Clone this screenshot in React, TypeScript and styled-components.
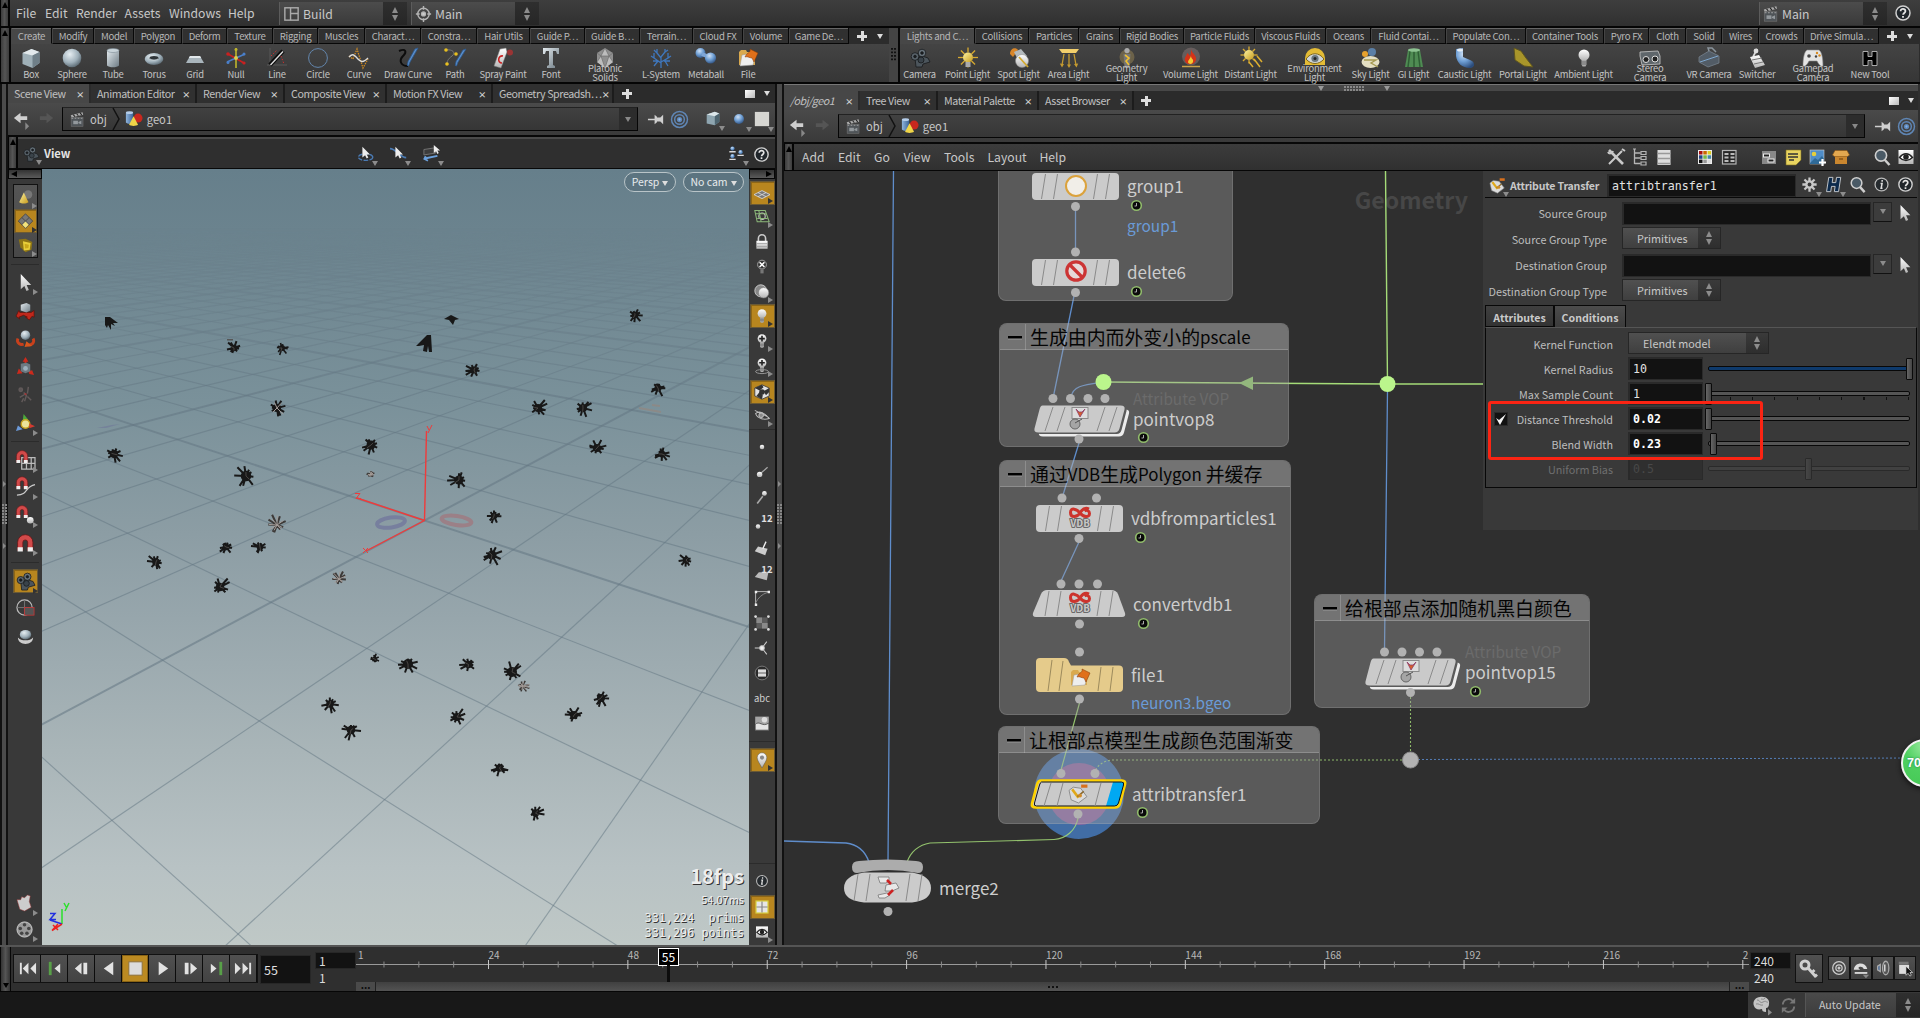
import React from "react";
import styled, { createGlobalStyle, css } from "styled-components";

const UI = `"Noto Sans CJK SC", "Noto Sans", sans-serif`;
const MONO = `"DejaVu Sans Mono", "Liberation Mono", monospace`;

const Global = createGlobalStyle`
  * { box-sizing: border-box; }
  body { margin: 0; background: #111; overflow: hidden; }
  #root { width: 1920px; height: 1018px; }
  svg { display: block; flex: none; overflow: visible; }
`;

/* ---------- icons ---------- */

const G = {
  stone: "url(#gStone)",
  ball: "url(#gBall)",
  blue: "url(#gBlue)",
  blueBall: "url(#gBlueBall)",
  yellow: "url(#gYellow)",
  white: "url(#gWhite)",
};

const DefsSvg = styled.svg`position: absolute;`;
const Defs = () => (
  <DefsSvg width="0" height="0">
    <defs>
      <linearGradient id="gStone" x1="0" y1="0" x2="1" y2="1"><stop offset="0" stopColor="#e3eaee" /><stop offset="1" stopColor="#6d7b84" /></linearGradient>
      <radialGradient id="gBall" cx=".38" cy=".3" r=".75"><stop offset="0" stopColor="#e6eef2" /><stop offset=".6" stopColor="#9fb0ba" /><stop offset="1" stopColor="#55636c" /></radialGradient>
      <linearGradient id="gBlue" x1="0" y1="0" x2="1" y2="0"><stop offset="0" stopColor="#8fb4dc" /><stop offset="1" stopColor="#3d6699" /></linearGradient>
      <radialGradient id="gBlueBall" cx=".4" cy=".3" r=".75"><stop offset="0" stopColor="#cfe0f4" /><stop offset=".5" stopColor="#6f9fd4" /><stop offset="1" stopColor="#2c4d7c" /></radialGradient>
      <linearGradient id="gYellow" x1="0" y1="0" x2="1" y2="1"><stop offset="0" stopColor="#fdf3a0" /><stop offset="1" stopColor="#c79a1c" /></linearGradient>
      <linearGradient id="gWhite" x1="0" y1="0" x2="0" y2="1"><stop offset="0" stopColor="#ffffff" /><stop offset="1" stopColor="#b4b4b4" /></linearGradient>
    </defs>
  </DefsSvg>
);

const magnet = (
  <>
    <path d="M2.5 16V8.500a7 7 0 0 1 14 0V16h-4.800V8.500a2.200 2.200 0 0 0-4.400 0V16z" fill="#d24a4a" stroke="#6b1515" strokeWidth=".7" />
    <path d="M2.5 13h4.800v4H2.500zM11.700 13h4.800v4h-4.800z" fill="#eee" />
  </>
);
const bulb = (
  <>
    <circle cx="10" cy="7" r="5.500" fill={G.white} />
    <path d="M7.500 12h5v4.600l-1 1.900h-3l-1-1.900z" fill="#aaa" />
    <path d="M7.500 14h5M7.500 16h5" stroke="#555" strokeWidth=".7" />
  </>
);
const camera = (
  <g stroke="#16191c" strokeWidth=".8">
    <path d="M5 10l7-2 6 2 2 4-7 2-1 3H6z" fill="#4c555c" />
    <circle cx="12" cy="5" r="3.800" fill="#67727a" />
    <circle cx="5" cy="8.500" r="3.800" fill="#59636b" />
    <circle cx="11" cy="12" r="3" fill="#3a434a" />
    <circle cx="12" cy="5" r="1.300" fill="#1c1f22" />
    <circle cx="5" cy="8.500" r="1.300" fill="#1c1f22" />
  </g>
);
const clapper = (
  <>
    <path d="M2 5l14-3.500 .7 2.800L3 7.700z" fill="#aaa" />
    <path d="M5 4.200l2 2.400M9 3.200l2 2.400M13 2.200l2 2.400" stroke="#222" strokeWidth="1.200" />
    <rect x="2.500" y="7.500" width="14" height="10.500" fill="#4f5458" stroke="#777" strokeWidth=".6" />
    <rect x="5" y="11.500" width="5.500" height="4" fill="#93989c" />
    <path d="M11 13l3.500-1.600v4.300L11 14.500z" fill="#93989c" />
    <path d="M3 8.600h13" stroke="#aaa" strokeDasharray="2 1.600" />
  </>
);
const rays = (cx: number, cy: number, r: number, len: number) => (
  <>
    {Array.from({ length: 8 }, (_, i) => {
      const a = (i * Math.PI) / 4;
      const x = Math.cos(a), y = Math.sin(a);
      return <line key={i} x1={cx + x * r} y1={cy + y * r} x2={cx + x * len} y2={cy + y * len} stroke="#d8aa30" strokeWidth="1.300" />;
    })}
    <circle cx={cx} cy={cy} r={r} fill={G.yellow} />
  </>
);

const ICONS: Record<string, React.ReactNode> = {
  box: <><path d="M1.500 5l9-4 8 3v11l-7 5-10-4z" fill="#9fb0b8" /><path d="M1.500 5l9-4 8 3-7 3.500z" fill="#e2e9ec" /><path d="M11.500 7.500l7-3.500v11l-7 5z" fill="#6f7f88" /></>,
  sphere: <circle cx="10" cy="10" r="9.300" fill={G.ball} />,
  tube: <><path d="M4 2.500v15c2 2.400 10 2.400 12 0v-15z" fill={G.stone} /><ellipse cx="10" cy="2.500" rx="6" ry="2" fill="#c9d4da" stroke="#7d8c95" strokeWidth=".6" /></>,
  torus: <><ellipse cx="10" cy="11" rx="9.300" ry="6" fill={G.ball} /><ellipse cx="10" cy="10" rx="4.500" ry="2" fill="#2e3438" /><path d="M6 11c2 1.500 6 1.500 8 0" stroke="#c5d0d6" fill="none" /></>,
  grid: <><path d="M5 8h10l4 7H1z" fill="#a9b5bc" /><path d="M5 8h10l1.200 2H3.800z" fill="#e2e8eb" /></>,
  null: <g strokeWidth="1.600"><path d="M10 0v20" stroke="#bfb52c" /><path d="M1 14L19 6" stroke="#4a7fc9" /><path d="M2 6l16 9" stroke="#c92020" /><circle cx="10" cy="10" r="2" fill="#d8cf50" /><circle cx="2" cy="6" r="1.800" fill="#c92020" /><circle cx="18" cy="15" r="1.600" fill="#c92020" /><circle cx="2" cy="14.500" r="1.500" fill="#4a7fc9" /><circle cx="18" cy="6" r="1.500" fill="#4a7fc9" /><circle cx="10" cy="1.500" r="1.500" fill="#bfb52c" /></g>,
  line: <><path d="M3 0v18M0 17h20" stroke="#585858" fill="none" /><path d="M3 17L16 3" stroke="#0c0c0c" strokeWidth="4.400" /><path d="M3.500 17L16 3.500" stroke="#ddd" strokeWidth="1.400" /><path d="M4 8l6-6M14 8l3 8" stroke="#c93030" strokeDasharray="1.500 1.500" /></>,
  circle: <circle cx="10" cy="10" r="9.400" fill="none" stroke="#6386ad" strokeWidth="1" />,
  curve: <><path d="M0 8l4 3 4-10 6 19 5-9" stroke="#d08a20" strokeDasharray="1.500 1" fill="none" strokeWidth="1.300" /><path d="M0 9c4-4 5-2 8 1s5 6 11 0" stroke="#ddd" strokeWidth="1.400" fill="none" /></>,
  draw: <><path d="M1 3c7-3 8 1 4 5s-3 10 5 10" stroke="#0c0c0c" strokeWidth="2" fill="none" /><path d="M20 0l-8 14-1.500 4-1.200-.6 .8-4L17 1z" fill="#5d8fca" stroke="#2c5c94" strokeWidth=".8" /></>,
  path: <><path d="M1 2c7-1 10 3 6 6s-6 6-4 9" stroke="#777" fill="none" /><circle cx="1" cy="2" r="1.800" fill="#e8c020" /><circle cx="11" cy="6" r="1.800" fill="#e8c020" /><circle cx="2" cy="16" r="1.800" fill="#e8c020" /><path d="M21 1l-8 13-1.500 4-1.200-.6 .8-4L18 2z" fill="#5d8fca" stroke="#2c5c94" strokeWidth=".8" /></>,
  spray: <><path d="M7 1l6-1 1 4-6 16-7-2z" fill={G.white} stroke="#777" strokeWidth=".5" /><path d="M10 8c-5-1-6 7-1 7" stroke="#c22" strokeWidth="1.600" fill="none" /><circle cx="17" cy="4.500" r="3" fill="#a33" opacity=".85" /></>,
  font: <path d="M2 0h16v6h-2l-1-3h-3v14l2 1v2H6v-2l2-1V3H5L4 6H2z" fill={G.stone} />,
  solid: <><path d="M10 0l8 5v9l-8 6-8-6V5z" fill="#8f8f8f" /><path d="M10 0L6 8h8zM10 20L6 8l-4 6zM14 8l4 6-8 6z" fill="#bdbdbd" /><path d="M10 0L6 8h8zM6 8L2 5M6 8l-4 6M6 8l4 12 4-12 4-3M14 8l4 6" stroke="#666" fill="none" strokeWidth=".6" /></>,
  tree: <g stroke="#3f77bd" fill="none" strokeWidth="1.300"><path d="M10 20V9M10 15L3 10V5M3 10L0 8M10 14l7-4V5M17 10l3-2M10 10L6 5V1M6 5L3 2M10 9l4-5V1M14 4l3-2M7 13H2M13 13h6M3 18l4-5M17 18l-3-5" /></g>,
  meta: <><circle cx="4.500" cy="5" r="5" fill={G.blueBall} /><path d="M6 6l7 3" stroke="#7fa6d6" strokeWidth="4" /><circle cx="14.500" cy="10" r="5.600" fill={G.blueBall} /></>,
  file: <><path d="M1 4l2-2h5l1 2h8v13H1z" fill="#d9a94e" /><path d="M4 7l14-2-3 12-13 1z" fill="#eee" stroke="#999" strokeWidth=".5" /><path d="M7 9c2-5 6-4 5-8l8 4-4 9-2-4c-3 0-4-2-7-1z" fill="#e0701a" stroke="#7c3505" strokeWidth=".5" /></>,
  camera,
  point: <>{rays(10, 9.500, 5, 10)}<path d="M7.500 14h5v5h-5z" fill="#aaa" /></>,
  spot: <><path d="M1 6C1 0 7-1 9 2L4 9z" fill="#d8862a" /><path d="M5 4l7-3 6 7-8 6z" fill="#b4babd" /><circle cx="13" cy="13" r="6.500" fill={G.white} stroke="#888" strokeWidth=".5" /><path d="M10 9l9 10" stroke="#d2a930" strokeWidth="1.800" /></>,
  area: <><path d="M0 1h20l-3 4H3z" fill="#f2cf6c" /><path d="M5 6L3 17M10 6v12M15 6l2 11" stroke="#c49a30" strokeWidth="1.300" fill="none" /><path d="M.8 15.500l2.200 4 2-3.500zM8 16.500l2 3.500 2-3.500zM15 16l2.500 3.500 1.700-4z" fill="#c49a30" /></>,
  geo: <><circle cx="10" cy="9" r="7.500" fill="#8a7a50" opacity=".6" /><circle cx="10" cy="2.600" r="2.600" fill="#aaa" /><path d="M6.500 6h7l-1 14h-5z" fill="#777" /><path d="M8 7l4 3-3 3 3 4" stroke="#f0c030" strokeWidth="1.600" fill="none" /></>,
  volume: <><circle cx="10" cy="8.500" r="9" fill="#8a7a7a" opacity=".5" /><path d="M10 1c1 5 6 6 5 11-1 5-9 6-11 1-1-4 2-5 2-8 2 1 2 2 3 3 1-2 1-4 1-7z" fill="#d43318" /><path d="M10 8c0 3 3 3 2 6s-5 2-5 0 2-3 3-6z" fill="#f5c930" /><path d="M1 18.500h18" stroke="#caa24a" strokeWidth="1.500" /></>,
  distant: <>{rays(8, 7, 5, 8.500)}<path d="M13 11l6 8M16 8l5 6M8 14l4 5" stroke="#dcae30" strokeWidth="1.500" /></>,
  env: <><path d="M0 10a10 10 0 0 1 20 0v7H0z" fill="#e3bb35" /><path d="M1 11c5-7 13-7 18 0-5 6-13 6-18 0z" fill="#cfd4d6" stroke="#806818" /><circle cx="10" cy="10.500" r="3.600" fill="#6b7880" /><circle cx="10" cy="10.500" r="1.500" fill="#222" /></>,
  sky: <><circle cx="4" cy="6" r="3" fill="#e7a22e" /><circle cx="11" cy="4" r="4" fill="#5b7fa6" /><ellipse cx="9.500" cy="14" rx="9" ry="6" fill="#e4dfc4" /><path d="M3 12h12l-5 3 7 4" stroke="#a59a52" fill="none" strokeWidth="1.400" /></>,
  gi: <><path d="M4 2h12l3 17H1z" fill="#4f8b53" /><path d="M6 3L4 19M10 3v16M14 3l2 16" stroke="#2f5f35" strokeWidth="1.500" /><ellipse cx="10" cy="2" rx="6" ry="1.800" fill="#8cc290" /></>,
  caustic: <><path d="M1 1l7-1v9l7 3c6 2 5 8 0 8C7 20 2 15 1 8z" fill={G.blueBall} /><ellipse cx="5" cy="2" rx="3" ry="1.500" fill="#e5edf5" /></>,
  portal: <path d="M1 0l7 3 5 7 7 9-9-1L2 12z" fill="#a8952a" stroke="#5e5420" />,
  ambient: bulb,
  stereo: <><path d="M0 4l18-1 2 5v8l-18 1-2-9z" fill="#5f666b" stroke="#c8c8c8" strokeWidth=".8" /><circle cx="6" cy="11.500" r="3" fill="#222" stroke="#ddd" /><circle cx="15" cy="11" r="3" fill="#222" stroke="#ddd" /></>,
  vr: <><path d="M0 9l10-6 10 5v7l-11 4-9-5z" fill="#525c66" stroke="#7c8894" strokeWidth=".7" /><path d="M1 14L19 8" stroke="#7fa8cf" /><path d="M10 3l-1-3h4l4 4" stroke="#8a949c" strokeWidth="1.500" fill="none" /></>,
  switcher: <><path d="M10 1l-4 8" stroke="#ddd" strokeWidth="1.700" /><path d="M3 9l9-2 6 10-10 3z" fill={G.white} /><path d="M5 12l10-2M7 16l9-2" stroke="#777" /><circle cx="9" cy="3" r="2.400" fill="#ddd" /></>,
  pad: <><path d="M4 2h12c3 2 4 9 4 16-2 1-4-1-6-5H6c-2 4-4 6-6 5C0 11 1 4 4 2z" fill="#e4e4e4" stroke="#888" strokeWidth=".6" /><circle cx="6" cy="8" r="1.800" fill="#444" /><circle cx="14" cy="5" r="1.200" fill="#d88a20" /><circle cx="16.500" cy="7.500" r="1.200" fill="#d88a20" /><circle cx="13" cy="8.500" r="1.200" fill="#444" /></>,
  newtool: <path d="M3 3.500h5v5h4v-5h5v14h-5v-5H8v5H3z" fill="#000" stroke="#bbb" strokeWidth=".9" />,
  layout: <g fill="none" stroke="#aaa" strokeWidth="1.500"><rect x="3" y="4" width="14" height="13" /><path d="M9 4v13M9 10h8" /></g>,
  desktop: <g fill="none" stroke="#b5b5b5" strokeWidth="1.500"><circle cx="10" cy="10.500" r="6" /><circle cx="10" cy="10.500" r="2" fill="#ccc" /><path d="M10 2v4M10 15v4M2 10.500h4M14 10.500h4" /></g>,
  clap: clapper,
  help: <><circle cx="10" cy="10" r="7" fill="#20262b" stroke="#d0d0d0" strokeWidth="1.500" /><path d="M7.600 8.200c0-3.200 5-3 4.800 0-.1 1.700-2.300 1.900-2.300 3.600M10 13v1.800" stroke="#e4e4e4" strokeWidth="1.800" fill="none" /></>,
  info: <><circle cx="10" cy="10" r="6.800" fill="#252a2e" stroke="#bbb" strokeWidth="1.300" /><path d="M10.700 5.300v1.800M9 9h1.600l-1 5h1.500" stroke="#ddd" strokeWidth="1.600" fill="none" /></>,
  back: <><path d="M2 8.500L9 3v3.500h7v4H9V14z" fill="#cfcfcf" /><path d="M14 13l4 4-4 4z" fill="#888" /></>,
  fwd: <path d="M17 8.500L10 3v3.500H3v4h7V14z" fill="#555" />,
  geoobj: <><path d="M1 3v11c2 2 6 2 8 0V3z" fill={G.blue} /><ellipse cx="5" cy="3" rx="4" ry="1.500" fill="#b4cdea" /><circle cx="14.500" cy="9" r="5" fill="#c8281e" /><path d="M9.500 7l5 9.500c-2 1.600-8 1.600-10 0z" fill="#f0d548" /></>,
  pin: <path d="M1 9.300h7v1.400H1zM8 5l2.500 2v6L8 15zM10.500 8H14l3-3v10l-3-3h-3.500z" fill="#cfcfcf" />,
  target: <g fill="none" stroke="#5f86b5" strokeWidth="1.400"><circle cx="10" cy="10" r="7.600" /><circle cx="10" cy="10" r="4.600" /><circle cx="10" cy="10" r="1.800" fill="#7fb0ea" /></g>,
  cube: <><path d="M3 5l9-3 5 2v9l-5 4-9-2z" fill="#8ea5b0" /><path d="M3 5l9-3 5 2-5 3z" fill="#dce6ea" /><path d="M12 7l5-3v9l-5 4z" fill="#4d646f" /></>,
  ball: <circle cx="10" cy="10" r="5" fill={G.blueBall} />,
  white: <rect x="3" y="2" width="15" height="15" fill="#d6d6d2" />,
  seltool: <><ellipse cx="9.500" cy="13.500" rx="8" ry="3.600" fill="none" stroke="#4a7ab3" strokeWidth="1.500" strokeDasharray="5 1.500" /><path d="M6 2v12l3-2.500 1.800 3.500 1.800-1-1.800-3.500h3.600z" fill="#eee" /></>,
  selcurve: <><path d="M0 4c7 0 11 10 18 10" stroke="#4a7ab3" strokeWidth="2" fill="none" /><path d="M6 2v12l3-2.500 1.800 3.500 1.800-1-1.800-3.500h3.600z" fill="#eee" /></>,
  selcam: <><path d="M1 5l13-2v6L1 11z" fill="#3c3c3c" stroke="#777" /><path d="M2 15l14-3M3 12.500L1.500 15.500l4 2" stroke="#6ba0dc" strokeWidth="2" fill="none" /><path d="M12 0v9l2.500-2 1.500 3 1.500-1-1.500-3h3z" fill="#eee" /></>,
  people: <g fill={G.blueBall}><circle cx="5" cy="4" r="2.400" /><circle cx="5" cy="12.500" r="2.400" /><circle cx="14" cy="8" r="2.400" /><path d="M1.500 7.500h7M1.500 16h7M10.500 11.500h7" stroke="#dcdcdc" strokeWidth="1.600" /></g>,
  tools: <g stroke="#c9c9c9" strokeWidth="2" fill="none"><path d="M3 17L16 4M16 2l3 2" /><path d="M3 3l14 14" strokeWidth="2.600" /><path d="M2 5c1 2 4 2 5-1" /></g>,
  hier: <g stroke="#b5b5b5" fill="none"><path d="M4.500 2v15M4.500 6h6M4.500 11h6M4.500 16.500h6" strokeWidth="1.300" /><path d="M3 2h3M11 4.500h5v3h-5zM11 9.500h5v3h-5zM11 15h5v3h-5z" strokeWidth="1.200" /></g>,
  list: <><rect x="3.500" y="3" width="13" height="15" fill="#dedede" /><path d="M3.500 6.500h13M3.500 11.500h13M3.500 16.500h13" stroke="#999" strokeWidth="1.500" /></>,
  palette: <><rect x="3" y="3" width="14" height="14" fill="#eee" />{["#a11", "#c60", "#dc2", "#248", "#7b4", "#48a", "#111", "#999", "#ddd"].map((c, i) => <rect key={i} x={4 + (i % 3) * 4.300} y={4 + Math.floor(i / 3) * 4.300} width="3.500" height="3.500" fill={c} />)}</>,
  table: <><rect x="3.500" y="3.500" width="13.500" height="13.500" fill="#262626" stroke="#b5b5b5" strokeWidth="1.200" /><path d="M5.500 7h4M11.500 7h4M5.500 10.500h4M11.500 10.500h4M5.500 14h4M11.500 14h4" stroke="#bbb" strokeWidth="1.800" /></>,
  nodes: <><rect x="3" y="4" width="14" height="13" fill="#888" /><rect x="4.500" y="7" width="6" height="3" fill="#222" stroke="#eee" /><rect x="9" y="12" width="6" height="3" fill="#222" stroke="#eee" /></>,
  note: <><path d="M3 3h15v10l-5 5H3z" fill="#e9d460" stroke="#7c6d1e" strokeWidth=".6" /><path d="M5 7h10M5 10h10M6 13h5" stroke="#333" strokeWidth="1.500" /></>,
  image: <><rect x="3" y="3" width="14" height="14" fill="#4f8dc8" stroke="#ccc" strokeWidth=".6" /><circle cx="7" cy="7" r="2.300" fill="#e6cf3c" /><path d="M3 16l5-5 3 2 4-4 2 3v5H3z" fill="#2f6a98" /><path d="M15.500 12v7M12 15.500h7" stroke="#fff" strokeWidth="2.200" /></>,
  bundle: <><path d="M4 9h12v8H4z" fill="#c9862f" /><path d="M4 3.500h12l2.500 4.500-2 1.500h-13L1.500 8z" fill="#e3a850" stroke="#8a5413" strokeWidth=".6" /><path d="M8 12h4" stroke="#8a5413" strokeWidth="1.500" /></>,
  search: <><path d="M12 12l5.500 6" stroke="#cfcfcf" strokeWidth="2.500" /><circle cx="9" cy="8.500" r="5.600" fill="#4a5a66" stroke="#cfcfcf" strokeWidth="1.600" /></>,
  eye: <><rect x="2.500" y="3" width="15" height="14" fill={G.white} /><path d="M3.500 10.500c4-5 9-5 13 0-4 4-9 4-13 0z" fill="#fff" stroke="#222" strokeWidth="1.400" /><circle cx="10" cy="10" r="2.800" fill="#222" /></>,
  gear: <><g stroke="#c9c9c9" strokeWidth="2.400"><path d="M10 2.500v15M2.500 10h15M4.700 4.700l10.600 10.600M15.300 4.700L4.700 15.300" /></g><circle cx="10" cy="10" r="4.600" fill="#c9c9c9" /><circle cx="10" cy="10" r="2" fill="#383838" /></>,
  hlogo: <path d="M5 2.500h4.400l-.8 5.500h3.800l.8-5.500h4.400L15.300 17.500h-4.400l.8-5.500H7.900l-.8 5.500H2.700z" fill="#0c2a4c" stroke="#c5c9cd" strokeWidth="1" />,
  attr: <><path d="M1 7l4-3 7 1 6 8-8 6-7-3z" fill="#dcdcdc" stroke="#777" strokeWidth=".7" /><path d="M4 6l6 8" stroke="#e0a818" strokeWidth="2.600" /><path d="M9 13l6-5" stroke="#8a6a30" strokeWidth="1.500" /><circle cx="11.500" cy="12" r="1.800" fill="#d08a28" /><path d="M12.500 3h6" stroke="#d8701c" strokeWidth="3" /></>,
  cone: <><circle cx="13" cy="6.500" r="5" fill="#777" /><path d="M8 4l5.500 11.500c-3 2-8 2-11 0z" fill={G.yellow} /></>,
  diamond: <><path d="M10 1l8.500 8.500L10 18 1.500 9.500z" fill="#777" stroke="#444" /><path d="M5.700 5.300l8.600 8.400M14.300 5.300l-8.600 8.400" stroke="#444" /><path d="M10 10l3.800 3.800L10 17.500l-3.800-3.700z" fill="#f2e27c" /></>,
  ybox: <><path d="M2 3l8-1 8 4-1 9-7 3-6-6z" fill="#8c7416" /><path d="M7 5l9 2-1 8-7 1z" fill="#e8cf3a" /><path d="M9 8l5 1-.6 4-4 .5z" fill="#c9a81a" /></>,
  cursor: <path d="M5 1v16l3.800-3.400L11 19l2.500-1.100L11.200 12.500H16z" fill={G.white} />,
  move: <><path d="M0 16l3-6 1 2 12 0 3-2v7l-2-1-3 4-4-3h2l-4-2-5 2 1 2z" fill="#c0281c" stroke="#5e0e08" strokeWidth=".7" /><path d="M5 4l6-2 4 2v6l-4 2-6-2z" fill={G.stone} /></>,
  rotate: <><path d="M2 10c-2 5 3 7 6 6M18 10c2 4-1 7-5 7" stroke="#c8401c" strokeWidth="3" fill="none" /><path d="M9 19l2-6 6 5z" fill="#d8561c" /><circle cx="10" cy="6.500" r="5" fill={G.ball} /></>,
  scale: <><path d="M10 0l3 5H7zM1 18l2-6 4 5zM13 15l4-1 2 5-5-1z" fill="#cc2a1c" /><path d="M10 4v4" stroke="#cc2a1c" strokeWidth="2" /><path d="M5 7l6-1 4 2v7l-5 2-5-2z" fill="#6d7a82" /><circle cx="10" cy="12" r="2.500" fill="#9db0bb" /></>,
  pose: <g stroke="#625a5a" strokeWidth="1.500" fill="none"><circle cx="5" cy="5" r="1.800" fill="#5b5555" /><path d="M8 8l3 3-2 6M12 12l4 4M13 2l-1 7M4 13l5-3M6 18l2-4" /><path d="M9 9l2 1" stroke="#a33" /></g>,
  handle: <><path d="M8 0l5 6-6 1z" fill="#4ca83c" /><circle cx="10" cy="10.500" r="4.500" fill="#ece49a" stroke="#c9a420" strokeWidth="1.500" /><path d="M0 18l2-6 5 4z" fill="#6c9ad8" /><path d="M20 13l-6-3v5z" fill="#d23a30" /></>,
  magGrid: <><path d="M6 7h14v12H6zM11 7v12M16 7v12M6 13h14" fill="none" stroke="#bbb" strokeWidth="1.300" /><g transform="scale(.85) translate(-2 -2)">{magnet}</g></>,
  magCurve: <><path d="M1 18c12 0 8-9 19-11" stroke="#ccc" fill="none" strokeWidth="1.300" /><g transform="scale(.85) translate(-2 -3)">{magnet}</g></>,
  magPoint: <><g transform="scale(.85) translate(-2 -2)">{magnet}</g><circle cx="15" cy="15" r="3.500" fill={G.white} /></>,
  magnet: <g transform="translate(-1.200 -1) scale(1.150)">{magnet}</g>,
  clock: <><circle cx="9" cy="9" r="8" fill="none" stroke="#bbb" strokeWidth="1.300" /><path d="M9 1v16M1 9h16" stroke="#777" /><rect x="9" y="9" width="10" height="8" fill="#555" stroke="#c33" strokeWidth=".8" /></>,
  drum: <><ellipse cx="10" cy="7" rx="6" ry="5" fill={G.ball} /><path d="M2 10c0 9 16 9 16 0-3 4-13 4-16 0z" fill="#ccc" /></>,
  hand: <path d="M1 6l4 0 1-3 3 1 3-3 3 1-1 6 2 6-7 4-5-2z" fill="#ccc" stroke="#933" strokeWidth=".5" />,
  reel: <><circle cx="9" cy="10" r="8" fill="#999" stroke="#ccc" />{[[9, 5], [13.500, 9], [11.500, 14], [6, 14], [4.500, 9]].map(([x, y]) => <circle key={x} cx={x} cy={y} r="1.900" fill="#444" />)}</>,
  plane: <><path d="M0 12l10-5 10 5-10 5z" fill="#777" stroke="#ddd" /><path d="M5 9.500l10 5M15 9.500l-10 5" stroke="#ddd" /></>,
  uv: <g fill="none" stroke="#8cb87a" strokeWidth="1.300"><path d="M1 2h13l5 14H4z" /><circle cx="10" cy="9" r="4" stroke="#ccc" /><path d="M2 6h13M4 12h13M6 2l3 14" /></g>,
  lock: <><path d="M5.500 9V5.500a4.500 4.500 0 0 1 9 0V9" fill="none" stroke="#ccc" strokeWidth="2" /><rect x="3" y="8.500" width="14" height="10" fill={G.white} /><path d="M3 12h14M3 15.500h14" stroke="#999" /></>,
  bulbx: <><circle cx="10" cy="7" r="5.500" fill="#333" stroke="#bbb" /><path d="M7 4l6 6M13 4l-6 6" stroke="#fff" strokeWidth="2" /><rect x="8" y="13" width="4" height="5" fill="#777" /></>,
  shaded: <><circle cx="8.500" cy="8.500" r="7.500" fill="#888" stroke="#ddd" /><circle cx="12" cy="11" r="6.500" fill={G.white} stroke="#777" strokeWidth=".7" /></>,
  bulb,
  bulbplus: <>{bulb}<path d="M10 3.500v7M6.500 7h7" stroke="#222" strokeWidth="2" /></>,
  bulbdisc: <><ellipse cx="10" cy="17" rx="8" ry="2.500" fill="none" stroke="#aaa" /><g transform="translate(0 -1)">{bulb}<path d="M10 3.500v7M6.500 7h7" stroke="#222" strokeWidth="2" /></g></>,
  checker: <><path d="M1 5l9-4 9 4v10l-9 4-9-4z" fill="#e2e2e2" stroke="#333" /><path d="M1 5l9-4 2 3-5 4zM12 9l7-4v5l-4 4zM3 15l4-5 4 4-1 5z" fill="#333" /><circle cx="10" cy="10" r="3.500" fill="#333" /></>,
  hide: <g fill="none" stroke="#bbb" strokeWidth="1.300"><path d="M1 3l18 9M2 7c4-4 12-1 17 6-6 2-14 1-17-6z" /><circle cx="9" cy="9" r="2.800" fill="#888" /></g>,
  pt: <circle cx="10" cy="10" r="2.800" fill={G.white} />,
  pt2: <><path d="M8 12l9-8" stroke="#aaa" strokeWidth="1.500" /><circle cx="7" cy="13" r="3.400" fill={G.white} /></>,
  pt3: <><path d="M4 18l7-9" stroke="#aaa" strokeWidth="2" /><circle cx="13" cy="5.500" r="3" fill={G.white} /></>,
  pt12: <circle cx="5" cy="15.500" r="2.800" fill={G.white} />,
  prim: <><path d="M1 14l4-6 12 3-3 8z" fill="#ccc" /><path d="M11 11l4-9" stroke="#eee" strokeWidth="1.700" /></>,
  prim12: <path d="M1 15l5-6h12l-2 10z" fill="#bbb" />,
  angle: <g fill="none" stroke="#bbb" strokeWidth="1.200"><path d="M2 19V2h17" /><path d="M2 16C5 10 10 5 17 3" stroke="#888" /><path d="M1 1h3v3H1zM17 1h3v3h-3zM1 17h3v3H1z" fill="#eee" stroke="none" /></g>,
  hull: <><rect x="3" y="3" width="14" height="14" fill="#5c5c5c" /><path d="M3 3h7v7H3zM10 10h7v7h-7z" fill="#8a8a8a" />{[[2, 2], [18, 2], [2, 18], [18, 18]].map(([x, y]) => <circle key={`${x}${y}`} cx={x} cy={y} r="1.700" fill="#ddd" />)}</>,
  tri: <g stroke="#ccc" strokeWidth="1.300"><path d="M1 10h9l6-8M10 10l6 8" fill="none" /><circle cx="10" cy="10" r="2.800" fill="#eee" /></g>,
  badge: <><circle cx="10" cy="10" r="8.600" fill="#2b2b2b" stroke="#888" /><rect x="5" y="5.500" width="10" height="9" fill="#ddd" /><path d="M5 10h10" stroke="#777" strokeWidth="1.500" /></>,
  photo: <><rect x="1.500" y="2" width="17" height="17" fill="#a5a5a5" /><path d="M1.500 12c5-6 9 4 17-2v9h-17z" fill="#e4e4e4" stroke="#444" strokeWidth="1" /><circle cx="13" cy="6" r="3.500" fill="#ddd" /></>,
  marker: <><path d="M10 20C7 14 4 11 4 7a6 6 0 0 1 12 0c0 4-3 7-6 13z" fill={G.white} stroke="#555" strokeWidth=".6" /><circle cx="10" cy="7" r="2.600" fill="#888" /></>,
  quad: <><rect x="2.500" y="2.500" width="15" height="15" fill="#e6e6e6" stroke="#d8d040" strokeWidth="1.500" /><path d="M10 3v14M3 10h14" stroke="#888" strokeWidth="1.500" /></>,
  key: <><circle cx="6" cy="6" r="4" fill="none" stroke="#d0d0d0" strokeWidth="3" /><path d="M9 9l8 9M12.500 14l3-3M16 17.500l2-2" stroke="#d0d0d0" strokeWidth="2.800" /></>,
  gauge: <g fill="none" stroke="#ccc" strokeWidth="1.400"><circle cx="10" cy="10" r="7" /><circle cx="10" cy="10" r="3.500" /><circle cx="10" cy="10" r="1" fill="#ccc" /></g>,
  loop: <><path d="M2 12c1-9 13-9 15-1h-4c-1-3-5-3-6-1l2 2z" fill="#ddd" /><path d="M3 15.500h14" stroke="#ddd" strokeWidth="2" /><path d="M12 17.500h7l-3.500 4z" fill="#888" /></>,
  sound: <g fill="none" stroke="#aaa" strokeWidth="1.400"><path d="M4 8v4l3 2V6z" fill="#4a6a94" /><ellipse cx="13" cy="10" rx="3.500" ry="7.500" fill="#555" /><path d="M12 6v8" stroke="#eee" /></g>,
  opts: <><path d="M3 3h11v3H3z" fill="#777" /><rect x="3.500" y="6.500" width="11" height="10" fill="#ddd" /><path d="M11 8v10l2.500-2 2 3 1.500-1-1.500-3h3z" fill="#111" stroke="#eee" strokeWidth=".7" /></>,
  brain: <><path d="M2 11C0 6 4 2 8 2c6-1 10 3 9 7 0 2-1 4-3 4l0 4c-3 0-4-1-4-3-4 1-7 0-8-3z" fill="#c4c4c4" /><path d="M5 5c4 0 2 4 6 2s3 1 5 0M4 9c3-1 4 2 7 1M9 4c2 0 3 1 4-1" stroke="#8a8a8a" fill="none" /><path d="M16 14l4 3.500-4 3z" fill="#8c8c8c" /></>,
  refresh: <g fill="none" stroke="#777" strokeWidth="2"><path d="M4 9a6 6 0 0 1 11-3M16 11a6 6 0 0 1-11 3" /><path d="M17 2v6h-6zM3 18v-6h6z" fill="#777" stroke="none" /></g>,
};

const Icon = ({ n, s = 20 }: { n: string; s?: number }) => (
  <svg width={s} height={s} viewBox="0 0 20 20">{ICONS[n]}</svg>
);

/* ---------- shared parts ---------- */

const Screen = styled.div`
  width: 1920px; height: 1018px; display: flex; flex-direction: column; overflow: hidden;
  background: #2f2f2f; color: #c8c8c8; font: 11.5px/16px ${UI}; position: relative; white-space: nowrap;
`;
const Row = styled.div`display: flex; align-items: center;`;
const Push = styled.div`flex: 1;`;
const Gap = styled.div<{ $w: number }>`width: ${p => p.$w}px; flex: none;`;

const Grip = styled.div<{ $w?: number }>`
  width: ${p => p.$w ?? 10}px; flex: none; align-self: stretch; background: linear-gradient(90deg, #3c3c3c, #555 50%, #3c3c3c);
  border: solid #050505; border-width: 0 2px 0 1px;
  &::before { content: ""; display: block; margin: 2px auto 0; width: 0; border: 3.5px solid transparent; border-top: 0; border-bottom: 6px solid #000; }
`;
const Plus = styled.span`
  width: 10px; height: 10px; flex: none;
  background: linear-gradient(#ddd, #ddd) center/10px 3px no-repeat, linear-gradient(#ddd, #ddd) center/3px 10px no-repeat;
`;
const Down = styled.span<{ $c?: string }>`
  width: 0; flex: none; border: 3.5px solid transparent; border-bottom: 0; border-top: 5px solid ${p => p.$c ?? "#ddd"};
`;
const Updown = styled.span`
  width: 24px; align-self: stretch; flex: none; display: flex; flex-direction: column; align-items: center; justify-content: center; gap: 2px;
  background: linear-gradient(#2f2f2f, #262626);
  &::before, &::after { content: ""; border: 3.5px solid transparent; }
  &::before { border-top: 0; border-bottom: 6px solid #8c8c8c; }
  &::after { border-bottom: 0; border-top: 6px solid #8c8c8c; }
`;

/* ---------- top menu ---------- */

const MenuBar = styled(Row)`
  height: 28px; flex: none; background: linear-gradient(#3e3e3e, #303030); border-bottom: 2px solid #050505; font-size: 12.2px;
`;
const MenuItem = styled.span<{ $w: number }>`width: ${p => p.$w}px; flex: none;`;
const Combo = styled(Row)<{ $w: number }>`
  width: ${p => p.$w}px; height: 23px; margin-top: 1px; background: linear-gradient(#4c4c4c, #3a3a3a); border-left: 1px solid #5c5c5c;
  padding-left: 2px; gap: 2px; justify-content: flex-start;
  ${Updown} { margin-left: auto; }
`;

/* ---------- shelf ---------- */

const Shelf = styled.div`display: flex; height: 56px; flex: none; background: #2c2c2c; border-bottom: 2px solid #050505;`;
const ShelfSet = styled.div<{ $w: number }>`
  width: ${p => p.$w}px; display: flex; flex-direction: column; background: linear-gradient(#3f3f3f, #353535);
`;
const ShelfTabs = styled.div`display: flex; align-items: center; height: 16px; background: #2c2c2c; font-size: 9.6px; letter-spacing: -.27px;`;
const ShelfTab = styled.div<{ $w: number; $on?: boolean }>`
  width: ${p => p.$w}px; height: 16px; flex: none; text-align: center; line-height: 16px; overflow: hidden; color: #b8b8b8;
  border: solid #080808; border-width: 0 1px 1px 1px; border-left-color: #444; box-shadow: inset 0 1px #666; background: #303030;
  ${p => p.$on && css`background: #474747; border-bottom-color: #474747; border-left-color: #474747;`}
`;
const Tools = styled.div`display: flex; flex: 1; background: linear-gradient(#444, #363636);`;
const Tool = styled.div<{ $gap: number }>`
  width: 40px; margin-left: ${p => p.$gap}px; flex: none; display: flex; flex-direction: column; align-items: center; padding-top: 4px;
`;
const ToolName = styled.span<{ $two?: boolean }>`
  font-size: 9.4px; letter-spacing: -.22px; text-align: center; line-height: ${p => (p.$two ? 9 : 13)}px; margin-top: ${p => (p.$two ? -4 : 0)}px; white-space: pre; color: #c4c4c4;
`;
const Splitter = styled.div`
  width: 11px; flex: none; background: #444; border: solid #080808; border-width: 0 2px 0 0; display: flex; align-items: center; justify-content: center;
  &::after { content: ""; width: 6px; height: 14px; background: radial-gradient(circle at 1px 1px, #111 1px, transparent 1.2px) 0 0/3px 3.5px; }
`;

type TabDef = [string, number];
const leftTabs: TabDef[] = [["Create", 41], ["Modify", 42], ["Model", 40], ["Polygon", 48], ["Deform", 45], ["Texture", 46], ["Rigging", 45], ["Muscles", 47], ["Charact…", 56], ["Constra…", 56], ["Hair Utils", 53], ["Guide P…", 55], ["Guide B…", 55], ["Terrain…", 53], ["Cloud FX", 50], ["Volume", 46], ["Game De…", 60]];
const rightTabs: TabDef[] = [["Lights and C…", 75], ["Collisions", 54], ["Particles", 50], ["Grains", 41], ["Rigid Bodies", 64], ["Particle Fluids", 71], ["Viscous Fluids", 71], ["Oceans", 45], ["Fluid Contai…", 75], ["Populate Con…", 80], ["Container Tools", 78], ["Pyro FX", 45], ["Cloth", 37], ["Solid", 36], ["Wires", 37], ["Crowds", 45], ["Drive Simula…", 75]];
type ToolDef = [string, string, number];
const leftTools: ToolDef[] = [["Box", "box", 20], ["Sphere", "sphere", 41], ["Tube", "tube", 41], ["Torus", "torus", 41], ["Grid", "grid", 41], ["Null", "null", 41], ["Line", "line", 41], ["Circle", "circle", 41], ["Curve", "curve", 41], ["Draw Curve", "draw", 49], ["Path", "path", 47], ["Spray Paint", "spray", 48], ["Font", "font", 48], ["Platonic\nSolids", "solid", 54], ["L-System", "tree", 56], ["Metaball", "meta", 45], ["File", "file", 42]];
const rightTools: ToolDef[] = [["Camera", "camera", 19.5], ["Point Light", "point", 48], ["Spot Light", "spot", 51], ["Area Light", "area", 50], ["Geometry\nLight", "geo", 58], ["Volume Light", "volume", 64], ["Distant Light", "distant", 60], ["Environment\nLight", "env", 64], ["Sky Light", "sky", 56], ["GI Light", "gi", 43], ["Caustic Light", "caustic", 51], ["Portal Light", "portal", 58.5], ["Ambient Light", "ambient", 60.5], ["Stereo\nCamera", "stereo", 66.5], ["VR Camera", "vr", 59], ["Switcher", "switcher", 48], ["Gamepad\nCamera", "pad", 56], ["New Tool", "newtool", 57]];

const ShelfPart = ({ w, tabs, tools }: { w: number; tabs: TabDef[]; tools: ToolDef[] }) => (
  <ShelfSet $w={w}>
    <ShelfTabs>
      {tabs.map(([t, tw], i) => <ShelfTab key={t} $w={tw} $on={i === 0}>{t}</ShelfTab>)}
      <Gap $w={8} /><Plus /><Gap $w={10} /><Down />
    </ShelfTabs>
    <Tools>
      {tools.map(([t, ic, d], i) => (
        <Tool key={t} $gap={i === 0 ? d - 20 : d - 40}>
          <Icon n={ic} /><ToolName $two={t.includes("\n")}>{t}</ToolName>
        </Tool>
      ))}
    </Tools>
  </ShelfSet>
);

/* ---------- panes ---------- */

const Main = styled.div`display: flex; height: 861px; flex: none; background: #2f2f2f;`;
const VSplit = styled.div<{ $w: number }>`
  width: ${p => p.$w}px; flex: none; background: #4b4b4b; border: solid #111; border-width: 0 2px;
  display: flex; flex-direction: column; align-items: center; justify-content: center; gap: 17px;
  &::before, &::after { content: ""; border: 3px solid transparent; border-right: 0; border-left: 3px solid #8a8a8a; }
`;
const Nubs = styled.i`width: 5px; height: 20px; margin-bottom: 2px; background: radial-gradient(circle at 1px 1px, #888 .8px, transparent 1px) 0 0/3px 3px;`;
const Pane = styled.div<{ $w: number }>`width: ${p => p.$w}px; flex: none; display: flex; flex-direction: column;`;
const PaneEdge = styled.div`height: 7px; flex: none; background: #474747; border-top: 1px solid #777; display: flex; align-items: center; padding-left: 534px; gap: 20px;`;
const EdgeDots = styled.i`width: 20px; height: 5px; background: radial-gradient(circle at 1px 1px, #888 .8px, transparent 1px) 0 0/3px 3px;`;
const PaneTabs = styled.div`display: flex; align-items: center; height: 19px; flex: none; background: #2b2b2b; font-size: 10.7px; letter-spacing: -.42px;`;
const PaneTab = styled.div<{ $w: number; $on?: boolean }>`
  width: ${p => p.$w}px; height: 19px; flex: none; display: flex; justify-content: space-between; align-items: center; padding: 0 5px 0 6px;
  background: ${p => (p.$on ? "#474747" : "#303030")}; border-right: 2px solid #1c1c1c; color: #c0c0c0;
  ${p => p.$on && css`border-right-color: #2b2b2b;`}
  &::after { content: "×"; font: bold 8.5px/12px ${UI}; color: #d5d5d5; }
`;
const WinBox = styled.span`width: 10px; height: 8px; background: linear-gradient(135deg, #fff, #bbb); flex: none;`;
const PathBar = styled.div`display: flex; align-items: center; height: 34px; flex: none; background: linear-gradient(#4a4a4a, #3a3a3a); border-bottom: 2px solid #080808;`;
const PathField = styled.div<{ $w: number }>`
  width: ${p => p.$w}px; height: 24px; flex: none; display: flex; align-items: center; border: 1px solid #060606; border-top-color: #222;
  background: linear-gradient(#414141, #363636); font-size: 11.2px; padding-left: 6px;
`;
const DropBtn = styled.span`
  width: 18px; height: 22px; margin-left: auto; background: #2c2c2c; display: flex; align-items: center; justify-content: center;
`;
const PathIcons = ({ w }: { w: number }) => (
  <PathField $w={w}>
    <Icon n="clap" s={17} /><Gap $w={4} />obj<Gap $w={6} />
    <svg width="7" height="22" viewBox="0 0 7 22"><path d="M0 0l6 11-6 11" fill="none" stroke="#111" strokeWidth="1.5" /></svg>
    <Gap $w={5} /><Icon n="geoobj" s={18} /><Gap $w={4} />geo1
    <DropBtn><Down $c="#888" /></DropBtn>
  </PathField>
);
const Spot = styled.div<{ $w: number }>`width: ${p => p.$w}px; flex: none; display: flex; justify-content: center;`;
const WithArrow = styled.span<{ $dir?: string; $c?: string }>`
  position: relative; display: flex;
  &::after {
    content: ""; position: absolute; right: -3px; bottom: -3px; border: 3.5px solid transparent;
    ${p => p.$dir === "r"
      ? css`border-right: 0; border-left: 5px solid ${p.$c ?? "#8c8c8c"};`
      : css`border-bottom: 0; border-top: 5px solid ${p.$c ?? "#8c8c8c"};`}
  }
`;

/* ---------- scene view ---------- */

const ViewHead = styled.div`display: flex; align-items: stretch; height: 32px; flex: none; background: #2f2f2f; border-bottom: 1px solid #080808; box-shadow: inset 0 2px #4a4a4a;`;
const ViewTools = styled(Row)`flex: 1; padding-top: 3px;`;
const ViewTitle = styled.b`font-size: 11.2px; color: #e4e4e4; margin: -2px 0 0 0;`;
const ViewBody = styled.div`display: flex; flex: 1; min-height: 0;`;
const SideCol = styled.div<{ $w: number }>`width: ${p => p.$w}px; flex: none; background: #393939; display: flex; flex-direction: column; align-items: center;`;
const Scroller = styled.div<{ $right?: boolean }>`
  align-self: stretch; height: 10px; flex: none; background: linear-gradient(#333, #5a5a5a); border: 1px solid #060606; display: flex; align-items: center; padding: 0 2px;
  justify-content: ${p => (p.$right ? "flex-end" : "flex-start")};
  &::after { content: ""; border: 3px solid transparent; ${p => (p.$right ? "border-left: 6px solid #000; border-right: 0;" : "border-right: 6px solid #000; border-left: 0;")} }
`;
const SideItem = styled.div<{ $mt: number; $on?: boolean; $w?: number }>`
  width: ${p => p.$w ?? 25}px; height: 24px; flex: none; margin-top: ${p => p.$mt}px; display: flex; align-items: center; justify-content: center; position: relative;
  ${p => p.$on && css`background: #b8861f; border: 1px solid #6b5a35; box-shadow: inset 1px 1px #8f6716;`}
`;
const SideText = styled.b`position: absolute; right: 2px; top: 3px; font: bold 9.5px/10px ${UI}; color: #e0e0e0;`;
const SideWord = styled.span`font: 9.5px/12px ${UI}; color: #d0d0d0;`;
const Rule = styled.div<{ $mt: number }>`width: 28px; max-width: 100%; height: 1px; flex: none; margin-top: ${p => p.$mt}px; background: #2b2b2b;`;
const Trio = styled.div`margin-top: 5px; width: 25px; border: 1px solid #111; background: linear-gradient(#555, #484848);`;

type Side = { n?: string; at: number; on?: boolean; arrow?: boolean; text?: string; word?: string; rule?: boolean };
const spaced = (items: Side[], start: number) => {
  let end = start;
  return items.map(it => {
    const half = it.rule ? 0 : 12;
    const mt = it.at - half - end;
    end = it.rule ? it.at + 1 : it.at + 12;
    return { ...it, mt };
  });
};
const leftSide: Side[] = [
  { rule: true, at: 264 }, { n: "cursor", at: 282, arrow: true }, { n: "move", at: 310 }, { n: "rotate", at: 338 }, { n: "scale", at: 366 }, { n: "pose", at: 394 }, { n: "handle", at: 423, arrow: true },
  { rule: true, at: 441 }, { n: "magGrid", at: 460, arrow: true }, { n: "magCurve", at: 487, arrow: true }, { n: "magPoint", at: 515, arrow: true }, { n: "magnet", at: 543, arrow: true },
  { rule: true, at: 562 }, { n: "camera", at: 581, on: true, arrow: true }, { n: "clock", at: 608 }, { n: "drum", at: 637 }, { n: "hand", at: 903, arrow: true }, { n: "reel", at: 929, arrow: true },
];
const rightSide: Side[] = [
  { n: "plane", at: 193, on: true, arrow: true }, { n: "uv", at: 217, arrow: true }, { n: "lock", at: 242 }, { n: "bulbx", at: 267 }, { n: "shaded", at: 292, arrow: true }, { n: "bulb", at: 316, on: true, arrow: true },
  { n: "bulbplus", at: 341, arrow: true }, { n: "bulbdisc", at: 366, arrow: true }, { n: "checker", at: 392, on: true, arrow: true }, { n: "hide", at: 416, arrow: true }, { rule: true, at: 429 },
  { n: "pt", at: 447 }, { n: "pt2", at: 472 }, { n: "pt3", at: 497 }, { n: "pt12", at: 522, text: "12" }, { n: "prim", at: 548 }, { n: "prim12", at: 573, text: "12" }, { n: "angle", at: 598 },
  { n: "hull", at: 623 }, { n: "tri", at: 648 }, { n: "badge", at: 673 }, { word: "abc", at: 698 }, { n: "photo", at: 723 }, { rule: true, at: 741 }, { n: "marker", at: 760, on: true, arrow: true },
  { rule: true, at: 863 }, { n: "info", at: 881 }, { n: "quad", at: 907, on: true }, { n: "eye", at: 932, arrow: true },
];
const SideList = ({ items, start, s }: { items: Side[]; start: number; s: number }) => (
  <>
    {spaced(items, start).map(it =>
      it.rule ? <Rule key={it.at} $mt={it.mt} /> : (
        <SideItem key={it.at} $mt={it.mt} $on={it.on}>
          {it.n && (it.arrow ? <WithArrow $dir="r" $c={it.on ? "#333" : undefined}><Icon n={it.n} s={s} /></WithArrow> : <Icon n={it.n} s={s} />)}
          {it.text && <SideText>{it.text}</SideText>}
          {it.word && <SideWord>{it.word}</SideWord>}
        </SideItem>
      ))}
  </>
);

const Viewport = styled.div`
  flex: 1; position: relative; overflow: hidden;
  background: linear-gradient(#667f8b 0%, #6b838e 8%, #7a919a 30%, #8c9da4 47%, #97a6ac 58%, #a9b5b8 75%, #b8c2c4 90%, #bfc8c6 100%);
`;
const Pill = styled.div<{ $r: number; $w: number }>`
  position: absolute; top: 3px; right: ${p => p.$r}px; width: ${p => p.$w}px; height: 20px; border: 1px solid #b9c4c8; border-radius: 10px; background: #5c7480;
  display: flex; align-items: center; justify-content: center; gap: 3px; font-size: 10.5px; line-height: 20px; color: #e6eaec;
  ${Down} { margin-top: 2px; }
`;
const Stats = styled.div`
  position: absolute; right: 5px; bottom: 4px; text-align: right; color: #eee; text-shadow: 1px 1px #333; display: flex; flex-direction: column; align-items: flex-end;
`;
const Fps = styled.b`font: bold 20px/26px ${UI};`;
const Ms = styled.span`font: 11px/20px ${UI}; margin-bottom: 2px;`;
const Count = styled.span`font: 11.8px/15px ${MONO}; white-space: pre;`;

/* Ground plane projection; u and v count blocks of five grid cells from the origin. */
const wAt = (u: number, v: number) => 0.4024 * u + 0.489 * v + 1;
const proj = (u: number, v: number): [number, number] => {
  const w = wAt(u, v);
  return [(-237.56 * u + 516.1 * v + 424.5) / w, (75.5 * u + 90 * v + 520.5) / w];
};

const gridLines = () => {
  const out: React.ReactNode[] = [];
  const add = (key: string, p: (s: number) => [number, number], w: (s: number) => number, i: number) => {
    const major = i % 5 === 0;
    let s = -3;
    while (w(s) < 0.12) s += 0.05;
    const [a, b] = p(s);
    const [c, d] = p(15);
    out.push(<line key={key} x1={a} y1={b} x2={c} y2={d} strokeWidth={major ? 2 : 1.15} opacity={major ? 0.55 : i > 25 ? 0.28 : 0.52} />);
  };
  for (let i = -10; i <= 75; i++) {
    const k = i / 5;
    add(`u${i}`, s => proj(k, s), s => wAt(k, s), i);
    add(`v${i}`, s => proj(s, k), s => wAt(s, k), i);
  }
  return out;
};

/* One cell body: a dark core with uneven arms radiating from it. */
const Neuron = ({ x, y, r, tone, seed }: { x: number; y: number; r: number; tone?: number; seed: number }) => {
  let s = seed * 7919 + 13;
  const rnd = () => ((s = (s * 1103515245 + 12345) % 2147483648) / 2147483648);
  for (let i = 0; i < 3; i++) rnd();
  const lean = rnd() * Math.PI * 2;
  const arms = (count: number, scale: number) =>
    Array.from({ length: count }, (_, i) => {
      const a = ((i + rnd() * 0.8) / count) * Math.PI * 2;
      const len = r * scale * (0.75 + 0.22 * Math.cos(a - lean) + rnd() * 0.4);
      return `M${x} ${y}l${(Math.cos(a) * len).toFixed(1)} ${(Math.sin(a) * len * 0.9).toFixed(1)}`;
    }).join("");
  return (
    <g>
      <path d={arms(9, 1.05)} stroke={tone === 2 ? "#3d3a38" : "#181818"} strokeWidth={r > 6 ? 2 : 1.6} />
      {tone !== 2 && <circle cx={x} cy={y} r={r * 0.5} fill="#181818" />}
      {tone ? <path d={arms(tone === 2 ? 8 : 4, 0.9)} stroke="#a39b97" strokeWidth="1" /> : <path d={arms(2, 0.5)} stroke="#5b5754" strokeWidth=".7" />}
    </g>
  );
};
const neurons: [number, number, number, number?][] = [
  [234, 348, 6.5], [282, 348, 6], [474, 370, 7], [538, 408, 8], [583, 408, 8], [658, 388, 7], [597, 448, 8], [662, 454, 7], [459, 480, 9], [494, 516, 6.5], [492, 555, 9], [686, 560, 6.5], [635, 315, 6.5],
  [277, 408, 8, 1], [371, 445, 9], [371, 474.5, 3.5, 2], [246, 476, 10.5], [114, 454, 8], [277, 525, 9, 2], [260, 547, 6.5], [226, 547, 6.5], [156, 562, 7.5], [220, 587, 8.5], [339, 579, 7, 2],
  [468.5, 664.5, 7.5], [512, 672, 10], [522.5, 686, 6, 2], [601, 698, 8], [574, 715, 8], [457, 717, 8], [499.5, 768, 7.5], [535.5, 813, 7.5], [374.5, 659, 4.5], [408, 664, 10], [330, 704, 7.5], [351, 730, 8.5],
];

const Scene = () => (
  <svg width="707" height="776" viewBox="42 169 707 776">
    <defs>
      <linearGradient id="fade" gradientUnits="userSpaceOnUse" x1="0" y1="228" x2="0" y2="400"><stop offset="0" stopColor="#fff" stopOpacity="0" /><stop offset=".25" stopColor="#fff" stopOpacity=".4" /><stop offset="1" stopColor="#fff" /></linearGradient>
      <mask id="gm" maskUnits="userSpaceOnUse" x="42" y="169" width="707" height="776"><rect x="42" y="169" width="707" height="776" fill="url(#fade)" /></mask>
    </defs>
    <g mask="url(#gm)" stroke="#647783">{gridLines()}</g>
    <g fill="none" strokeWidth="4">
      <ellipse cx="391" cy="522.5" rx="14" ry="5" stroke="#777f9e" transform="rotate(-8 391 522.5)" />
      <ellipse cx="456.5" cy="520.5" rx="15" ry="4.5" stroke="#9b8087" transform="rotate(8 456.5 520.5)" />
    </g>
    <path d="M97 428l15-3 8-1-14 4z" fill="#6f7799" opacity=".6" />
    <path d="M639 408l22 4M652 405l8 1" stroke="#97857c" strokeWidth="2" opacity=".6" />
    {neurons.map(([x, y, r, tone], i) => <Neuron key={i} x={x} y={y} r={r} tone={tone} seed={i + 3} />)}
    <g fill="#181818">
      <path d="M105 317l5 0 8 6-5 0 2 3-4-2 0 6-3-5-1 3-2-3z" />
      <path d="M416 346l11-11 4 0 1 17-3 0-1-6-1 6-4-1 1-6-5 1z" />
      <path d="M444 319l7-4 8 4-4 1-2 5-4-5z" />
      <path d="M227 339h6v1.5h-6z" fill="#555" />
    </g>
    <g stroke="#f03a3a" strokeWidth="1.4" fill="none">
      <path d="M424.5 520.5L426.500 431" /><path d="M424.5 520.5L357 498" /><path d="M424.5 520.5L366 551" />
      <path d="M427 426l2 4M432 425l-4 8M355 493.500h5l-4 5h5M363 548l5 5M368 548l-5 5" strokeWidth="1" />
    </g>
    <g fill="none" strokeWidth="1.500">
      <path d="M62 924V909M64 903l2.500 4.500M69 903l-4 8" stroke="#2be02b" />
      <path d="M62 924l-12-4M50 913.500h5l-5 6h6" stroke="#2230e0" />
      <path d="M62 924l-10 6.500M53 925l5 5M58 924l-6 6.500" stroke="#ee2020" />
    </g>
  </svg>
);

/* ---------- network ---------- */

const NetMenu = styled.div`display: flex; align-items: center; height: 27px; flex: none; background: linear-gradient(#3c3c3c, #303030); border-bottom: 1px solid #060606; font-size: 12.2px;`;
const Canvas = styled.div`position: relative; flex: 1; overflow: hidden; background: #2f2f2f;`;
const Layer = styled.svg`position: absolute; left: 0; top: 0;`;
const at = css<{ $x: number; $y: number }>`position: absolute; left: ${p => p.$x - 784}px; top: ${p => p.$y - 171}px;`;
const NetBox = styled.div<{ $x: number; $y: number; $w: number; $h: number }>`
  ${at} width: ${p => p.$w}px; height: ${p => p.$h}px; border-radius: 8px; overflow: hidden;
  background: rgba(160, 160, 160, .38); border: 1px solid rgba(200, 200, 200, .2);
`;
const BoxHead = styled.div`
  height: 26px; display: flex; align-items: center; background: rgba(200, 200, 200, .23); border-bottom: 1px solid rgba(220, 220, 220, .25);
  font: 18.9px/25px ${UI}; color: #050505;
`;
const Fold = styled.span`
  width: 26px; height: 26px; flex: none; border-right: 1px solid rgba(220, 220, 220, .25); margin-right: 4px;
  background: linear-gradient(#000, #000) 8px 12px/14px 2.5px no-repeat, linear-gradient(#999, #999) 8px 14px/14px 1.5px no-repeat;
`;
const Lat = styled.span`font-size: 16.9px;`;
const NodeName = styled.div<{ $x: number; $y: number }>`${at} margin-top: -13px; font: 17px/24px ${UI}; color: #cdcdcd;`;
const NodeNote = styled(NodeName)`font-size: 15.4px; color: #6a9ad6;`;
const NodeType = styled(NodeName)`font-size: 15.3px; color: #6b6b6b;`;
const Watermark = styled.div`position: absolute; right: 450px; top: 13px; font: bold 23.1px/30px ${UI}; color: #474747;`;

const Stripes = ({ x, y, h, gap = 28, slant = 4 }: { x: number; y: number; h: number; gap?: number; slant?: number }) => (
  <path d={[-gap - 4, -gap + 8, gap - 8, gap + 4].map(d => `M${x + d + slant / 2} ${y + 1}l${-slant} ${h - 2}`).join("")} stroke="#8a8a8a" strokeWidth="1" />
);
const Dot = ({ x, y, r = 4.5 }: { x: number; y: number; r?: number }) => <circle cx={x} cy={y} r={r} fill="#b2b2b2" />;
const Clock = ({ x, y }: { x: number; y: number }) => (
  <g><circle cx={x} cy={y} r="4.8" fill="#0b0b0b" stroke="#92bd6c" strokeWidth="1.6" /><path d={`M${x} ${y - 2.5}v3h-2`} stroke="#aaa" strokeWidth="1" fill="none" /></g>
);
const VdbText = styled.text`font: 900 9.5px ${UI}; fill: #c4c4c4; stroke: #555; stroke-width: 1.6px; paint-order: stroke;`;
const Vdb = ({ x, y }: { x: number; y: number }) => (
  <g>
    <path d={`M${x} ${y - 5}c-3-4-9.500-6-9.500-.5s6.500 5 9.500 .5c3-5 6-5.500 9-4M${x} ${y - 5}c3 4 9.500 5 9.500 .5 0-3-3-4-5-2.500`} fill="none" stroke="#cc332c" strokeWidth="3" />
    <VdbText x={x} y={y + 9} textAnchor="middle">VDB</VdbText>
  </g>
);
const Vop = ({ x, y }: { x: number; y: number }) => {
  const shape = (dx: number, dy: number) => `M${x + 9 + dx} ${y + dy}h78q5 0 4 4l-5 19q-1 4-5 4h-76q-5 0-4-4l5-19q1-4 3-4z`;
  return (
    <g>
      <path d={shape(4, 3.5)} fill="#ececec" /><path d={shape(1.5, 1)} fill="#5a5a5a" /><path d={shape(-0.5, -0.5)} fill="#cacaca" />
      <Stripes x={x + 47} y={y} h={26} slant={8} />
      <rect x={x + 38} y={y + 1.5} width="16" height="11" fill="#ddd" stroke="#8a8a8a" />
      <path d={`M${x + 42} ${y + 3}l4 8 5-8-3 3h-3z`} fill="#d8602a" stroke="#8a3a6a" strokeWidth=".8" />
      <circle cx={x + 41} cy={y + 18} r="5" fill="#a5a5a5" stroke="#666" /><path d={`M${x + 41} ${y + 17}l7-4`} stroke="#555" />
    </g>
  );
};
const BoxNode = ({ x, y, children }: { x: number; y: number; children?: React.ReactNode }) => (
  <g><rect x={x} y={y} width="87" height="27" rx="4" fill="#cbcbcb" /><Stripes x={x + 43.5} y={y} h={27} />{children}</g>
);

const vb = "784 171 1134 774";
const Wires = () => (
  <Layer width="1134" height="774" viewBox={vb} fill="none">
    <circle cx="1079" cy="794" r="45" fill="#416da5" /><circle cx="1079" cy="794" r="31" fill="#8d68a4" />
    <g stroke="#5f8dcb" strokeWidth="1.3">
      <path d="M893.500 171L888 862M784 841l62 2q17 2 23 19M1075.500 210v38M1074 296L1053.500 396M1079 443l-16 52M1079 542l-18 39M1387.500 390L1384.500 650" />
      <path d="M1103 382c-20 3-30 4-32 15" />
    </g>
    <g stroke="#a5dc78" strokeWidth="1.4">
      <path d="M1385.500 171l2 213M1103 382l284 2h96" /><path d="M1078 818c-2 12-12 21-24 21.500L930 843q-17 3-23 19M1079.500 703L1061 770" strokeWidth="1.2" opacity=".85" />
      <path d="M1410.500 697v63M1410 760H1112q-14 2-17 12" strokeDasharray="2 2" strokeWidth="1.1" opacity=".8" />
    </g>
    <path d="M1418 759.500L1918 758" stroke="#557fb8" strokeDasharray="2 2" />
  </Layer>
);
const Nodes = () => (
  <Layer width="1134" height="774" viewBox={vb}>
    <BoxNode x={1032} y={173}><circle cx="1076" cy="186" r="10" fill="#f1eee8" stroke="#dba23c" strokeWidth="2" /></BoxNode>
    <BoxNode x={1032} y={259}><circle cx="1076" cy="271" r="9.200" fill="#e6dada" stroke="#cc3434" strokeWidth="3.200" /><path d="M1070 265l12 12" stroke="#cc3434" strokeWidth="3.200" /></BoxNode>
    <Dot x={1075.5} y={206.5} /><Dot x={1075.5} y={252} /><Dot x={1075.5} y={292.5} />
    {[1053, 1070.5, 1088, 1105].map(x => <Dot key={x} x={x} y={398.5} />)}
    <Vop x={1034} y={406} /><Dot x={1079} y={439} />
    <Dot x={1062} y={498} /><Dot x={1096.5} y={498} />
    <BoxNode x={1036} y={505}><Vdb x={1080} y={518} /></BoxNode><Dot x={1079} y={538.5} />
    <Dot x={1061} y={584} /><Dot x={1079} y={584} /><Dot x={1097.5} y={584} />
    <path d="M1047 590h64q5 0 7 4l7 19q1 4-3 4h-86q-4 0-3-4l8-19q2-4 6-4z" fill="#cbcbcb" /><Stripes x={1079} y={590} h={27} /><Vdb x={1080} y={603} />
    <Dot x={1079.5} y={624} /><Dot x={1079.5} y={652} />
    <path d="M1040 658h24q4 0 5 4l2 3.500h48q4 0 4 4V688q0 4-4 4h-79q-4 0-4-4v-26q0-4 4-4z" fill="#e5cb8b" />
    <path d="M1052 660l-4 31M1063 661l-4 30M1101 667l-3 24M1113 667l-3 24" stroke="#9c8a5c" strokeWidth="1" />
    <g transform="translate(1070 668)"><Icon n="file" /></g>
    <Dot x={1079.5} y={699} />
    <Dot x={1061} y={773.5} /><Dot x={1095} y={773.5} />
    <path d="M1041 780.500h81q4 0 3 4l-5 19q-1 4-5 4h-79q-5 0-4-4l5-19q1-4 4-4z" fill="#cacaca" />
    <path d="M1113 782h10q2 0 1 3l-5 18q-1 3-4 3h-9z" fill="#00a8f3" />
    <path d="M1041 780.500h81q4 0 3 4l-5 19q-1 4-5 4h-79q-5 0-4-4l5-19q1-4 4-4z" fill="none" stroke="#ffd200" strokeWidth="2.600" />
    <path d="M1041.500 782h80q3 0 2 3l-5 18q-1 3-4 3h-78q-3 0-2-3l5-18q1-3 2-3z" fill="none" stroke="#111" strokeWidth="1" />
    <path d="M1051 783l-7 23M1063 783l-6 23M1101 783l-6 23" stroke="#8a8a8a" strokeWidth="1" />
    <g transform="translate(1068 783) scale(1.050)"><Icon n="attr" /></g>
    <Dot x={1078} y={814} />
    <path d="M857 873q-5 0-5-6t7-6q28-3 57 0 7 0 7 6t-5 6q-30-6-61 0z" fill="#acacac" />
    <path d="M864 872.500h48q19 3 19 15.500t-19 14.500h-48q-20-2-20-14.500t20-15.500z" fill="#cbcbcb" />
    <Stripes x={888} y={873} h={29} />
    <path d="M878 877h11v4l-3 2h-6zM886 885l10-2 3 5-7 3h-7zM878 895l9-2 3 2-5 3h-6z" fill="#e8e8e8" stroke="#777" strokeWidth=".8" /><path d="M887 880l4 4M893 890l-5 5" stroke="#c22" strokeWidth="2.600" />
    <Dot x={888} y={911.5} />
    {[1384.5, 1402, 1419.5, 1437].map(x => <Dot key={x} x={x} y={652} />)}
    <Vop x={1365} y={659} /><Dot x={1410.5} y={692.5} />
    <circle cx="1410.500" cy="760" r="8" fill="#b2b2b2" stroke="#8b8b8b" />
    <circle cx="1103.500" cy="382" r="8" fill="#bbf58c" /><circle cx="1387.500" cy="384" r="8" fill="#bbf58c" />
    <path d="M1239 383l14-6.500v13.500z" fill="#93b77d" />
    {[[1136.5, 205.5], [1136.5, 291.5], [1143.5, 437.5], [1140.5, 537.5], [1143.5, 623.5], [1142.5, 812.5], [1475.5, 691.5]].map(([x, y]) => <Clock key={`${x}-${y}`} x={x} y={y} />)}
  </Layer>
);

/* ---------- parameters ---------- */

const Params = styled.div`position: absolute; right: 0; top: 0; width: 435px; height: 359px; background: #393939; padding: 3px 1px 0 2px; font-size: 10.8px;`;
const ParmHead = styled(Row)`height: 24px; border-bottom: 1px solid #080808; padding-left: 4px;`;
const ParmType = styled.b`width: 97px; flex: none; font-size: 10.6px; letter-spacing: -.2px; line-height: 20px;`;
const Entry = styled.div<{ $w: number; $h?: number; $bold?: boolean; $dim?: boolean }>`
  width: ${p => p.$w}px; height: ${p => p.$h ?? 23}px; flex: none; background: #121212; border: solid #2a2a2a; border-width: 2px 1px 1px 2px; padding-left: 3px;
  font: ${p => (p.$bold ? "bold" : "normal")} 11.6px/20px ${MONO}; color: #e2e2e2;
  ${p => p.$bold && css`color: #fff;`}
  ${p => p.$dim && css`background: #2f2f2f; color: #484848;`}
`;
const HeadIcons = styled(Row)`margin-left: 4px; gap: 5px; height: 20px; margin-top: -3px;`;
const ParmRows = styled.div`padding-top: 2px;`;
const Line = styled.div<{ $h: number }>`display: flex; align-items: center; height: ${p => p.$h}px;`;
const Label = styled.div<{ $w: number; $dim?: boolean }>`width: ${p => p.$w}px; flex: none; text-align: right; color: ${p => (p.$dim ? "#6f6f6f" : "#bdbdbd")};`;
const Menu = styled.div<{ $w: number }>`
  width: ${p => p.$w}px; height: 22px; margin-bottom: 2px; flex: none; display: flex; align-items: center; background: linear-gradient(#505050, #3f3f3f); border: 1px solid #262626; padding-left: 14px;
  ${Updown} { margin-left: auto; width: 22px; background: linear-gradient(#3a3a3a, #2e2e2e); }
`;
const SmallDrop = styled.span`width: 19px; height: 20px; margin: 0 4px 3px 2px; flex: none; background: #3c3c3c; border: 1px solid #262626; border-bottom-color: #111; display: flex; align-items: center; justify-content: center;`;
const ParmTabs = styled.div`display: flex; height: 22px; margin-top: 1px;`;
const ParmTab = styled.b<{ $w: number; $on?: boolean }>`
  width: ${p => p.$w}px; text-align: center; line-height: 23px; border: 1px solid #080808; border-bottom: ${p => (p.$on ? 0 : 1)}px solid #080808; font-size: 10.6px;
  background: ${p => (p.$on ? "linear-gradient(#4c4c4c, #3c3c3c)" : "linear-gradient(#3f3f3f, #333)")}; color: #cacaca;
`;
const Folder = styled.div`border: 1px solid #080808; border-top: 1px solid #555; height: 161px; padding-top: 3px;`;
const Track = styled.div<{ $fill?: string; $dim?: boolean }>`
  margin-left: 5px; width: 202px; height: 5px; border: 1px solid #080808; border-radius: 2px; position: relative; flex: none;
  background: ${p => p.$fill ?? "#555"};
  ${p => p.$dim && css`opacity: .3;`}
`;
const Thumb = styled.i<{ $x: number }>`position: absolute; left: ${p => p.$x}px; top: -9px; width: 7px; height: 22px; background: linear-gradient(90deg, #666, #444); border: 1px solid #0a0a0a; border-radius: 1px;`;
const Ticks = styled.i`position: absolute; left: 21px; right: 0; top: 5px; height: 3px; background: repeating-linear-gradient(90deg, #111 0 1px, transparent 1px 22.25px);`;
const Check = styled.span`width: 14px; height: 14px; margin-left: 8px; background: #121212; border: 1px solid #2a2a2a; flex: none; display: flex;`;
const Highlight = styled.div`position: absolute; left: 5px; top: 230px; width: 275px; height: 59px; border: 3px solid #fb2413; border-radius: 3px;`;

const Parameters = () => (
  <Params>
    <ParmHead>
      <WithArrow><Icon n="attr" s={17} /></WithArrow><Gap $w={4} />
      <ParmType>Attribute Transfer</ParmType>
      <Entry $w={189} $h={23}>attribtransfer1</Entry>
      <HeadIcons>
        <WithArrow><Icon n="gear" s={19} /></WithArrow><WithArrow><Icon n="hlogo" s={19} /></WithArrow><Icon n="search" s={19} /><Icon n="info" s={19} /><Icon n="help" s={19} />
      </HeadIcons>
    </ParmHead>
    <ParmRows>
      {["Source Group", "Destination Group"].map(t => (
        <React.Fragment key={t}>
          <Line $h={26}><Label $w={122}>{t}</Label><Gap $w={15} /><Entry $w={249} /><SmallDrop><Down $c="#8c8c8c" /></SmallDrop><Icon n="cursor" s={18} /></Line>
          <Line $h={26}><Label $w={122}>{t} Type</Label><Gap $w={15} /><Menu $w={99}>Primitives<Updown /></Menu></Line>
        </React.Fragment>
      ))}
    </ParmRows>
    <ParmTabs><ParmTab $w={69}>Attributes</ParmTab><ParmTab $w={72} $on>Conditions</ParmTab></ParmTabs>
    <Folder>
      <Line $h={25}><Label $w={127}>Kernel Function</Label><Gap $w={15} /><Menu $w={141}>Elendt model<Updown /></Menu></Line>
      <Line $h={25}><Label $w={127}>Kernel Radius</Label><Gap $w={15} /><Entry $w={75}>10</Entry><Track $fill="#0e3a6c"><Thumb $x={197} /></Track></Line>
      <Line $h={25}><Label $w={127}>Max Sample Count</Label><Gap $w={15} /><Entry $w={75}>1</Entry><Track><Ticks /><Thumb $x={-4} /></Track></Line>
      <Line $h={25}>
        <Check><svg width="12" height="12" viewBox="0 0 12 12"><path d="M1 5l3 2 7-6-6 11z" fill="#f2f2f2" /></svg></Check>
        <Label $w={105}>Distance Threshold</Label><Gap $w={15} /><Entry $w={75} $bold>0.02</Entry><Track><Thumb $x={-4} /></Track>
      </Line>
      <Line $h={25}><Label $w={127}>Blend Width</Label><Gap $w={15} /><Entry $w={75} $bold>0.23</Entry><Track><Thumb $x={1} /></Track></Line>
      <Line $h={25}><Label $w={127} $dim>Uniform Bias</Label><Gap $w={15} /><Entry $w={75} $dim>0.5</Entry><Track $dim><Thumb $x={96} /></Track></Line>
    </Folder>
    <Highlight />
  </Params>
);

/* ---------- playbar ---------- */

const Playbar = styled.div`display: flex; height: 47px; flex: none; background: #2f2f2f; border-top: 2px solid #555; border-bottom: 1px solid #060606;`;
const FootGrip = styled.div`
  width: 11px; flex: none; background: linear-gradient(90deg, #333, #555 50%, #333); border: solid #080808; border-width: 0 1px; display: flex; align-items: flex-end; justify-content: center; padding-bottom: 3px;
`;
const Transport = styled.div`display: flex; margin: 7px 0 0 2px; height: 29px; border: 1px solid #111;`;
const PlayBtn = styled.div<{ $on?: boolean }>`
  width: 27px; display: flex; align-items: center; justify-content: center; background: linear-gradient(#505050, #434343); border-right: 1px solid #0c0c0c;
  ${p => p.$on && css`background: #bb8a22; box-shadow: inset 0 0 0 1px #8a6414;`}
`;
const FrameField = styled.div`margin: 8px 4px 0 2px; width: 51px; height: 29px; background: #121212; border: 1px solid #272727; font: 12.5px/28px ${UI}; color: #e2e2e2; padding-left: 3px;`;
const RangeCol = styled.div<{ $w: number }>`width: ${p => p.$w}px; display: flex; flex-direction: column; padding-top: 5px; font: 12px/16px ${UI}; color: #dcdcdc; flex: none;`;
const RangeCell = styled.span<{ $in?: boolean }>`
  height: 17px; padding-left: 3px; border: 1px solid transparent; line-height: 15px;
  ${p => p.$in && css`background: #121212; border-color: #272727;`}
`;
const Timeline = styled.div`width: 1393px; flex: none; display: flex; flex-direction: column; overflow: hidden; position: relative;`;
const Scroll = styled.div`
  height: 9px; display: flex; justify-content: space-between; background: radial-gradient(circle at 697px 5px, #111 0 1px, transparent 1.4px), radial-gradient(circle at 693px 5px, #111 0 1px, transparent 1.4px), radial-gradient(circle at 701px 5px, #111 0 1px, transparent 1.4px), linear-gradient(#404040, #535353);
  &::before, &::after { content: "..."; width: 19px; font: bold 10px/5px ${UI}; color: #0a0a0a; text-align: center; background: #4a4a4a; }
  &::before { border-right: 1px solid #222; } &::after { border-left: 1px solid #222; }
`;
const Head = styled.div`
  position: absolute; left: 302px; top: 1px; width: 21px; height: 18px; background: #000; border: 1.5px solid #fff; color: #fff; font: 12px/15px ${UI}; text-align: center;
  &::after { content: ""; position: absolute; left: 8px; top: 16px; width: 3px; height: 17px; background: #0c0c0c; }
`;
const AxisText = styled.text`font: 10px ${UI}; fill: #b8b8b8;`;
const Square = styled.div<{ $w: number; $h: number; $mt: number }>`
  width: ${p => p.$w}px; height: ${p => p.$h}px; margin-top: ${p => p.$mt}px; flex: none; border: 1px solid #111; background: linear-gradient(#505050, #404040); display: flex; align-items: center; justify-content: center;
`;
const T0 = 132.5;
const PER = 5.807;
const frameX = (f: number) => T0 + (f - 24) * PER;
const TimeAxis = () => (
  <svg width="1393" height="35" viewBox="0 0 1393 35">
    <path d="M0 17.500H1393" stroke="#9a9a9a" strokeWidth="1.200" />
    {Array.from({ length: 40 }, (_, i) => (i + 1) * 6).map(f => {
      const major = f % 24 === 0;
      return <line key={f} x1={frameX(f)} x2={frameX(f)} y1={major ? 13 : 14.5} y2={major ? 22 : 20.5} stroke={major ? "#c8c8c8" : "#8a8a8a"} />;
    })}
    {[1, 24, 48, 72, 96, 120, 144, 168, 192, 216].map(f => <AxisText key={f} x={f === 1 ? 2 : frameX(f)} y="11.5">{f}</AxisText>)}
    <AxisText x={frameX(240)} y="11.5">2</AxisText>
  </svg>
);
const playIcons = [
  <path d="M2 4h2v12H2zM11 4v12L5 10zM19 4v12l-6-6z" fill="#e2e2e2" />,
  <><path d="M4 3h3v14H4z" fill="#58a048" /><path d="M16 5v10l-6-5z" fill="#e2e2e2" /></>,
  <path d="M10 4v12L3 10zM12 4h4v12h-4z" fill="#e2e2e2" />,
  <path d="M15 3v14L5 10z" fill="#e2e2e2" />,
  <rect x="3" y="3" width="14" height="14" fill="#dcdcdc" stroke="#8a7040" />,
  <path d="M6 3v14l10-7z" fill="#e2e2e2" />,
  <path d="M5 4h4v12H5zM11 4v12l7-6z" fill="#e2e2e2" />,
  <><path d="M4 5v10l6-5z" fill="#e2e2e2" /><path d="M13 3h3v14h-3z" fill="#58a048" /></>,
  <path d="M1 4v12l6-6zM9 4v12l6-6zM16 4h2v12h-2z" fill="#e2e2e2" />,
];

const Status = styled.div`display: flex; flex: 1; background: #181818;`;
const StatusRight = styled(Row)`margin-left: auto; width: 172px; background: #383838; height: 26px; padding-left: 4px; gap: 7px;`;
const Update = styled(Row)`width: 119px; height: 24px; margin-bottom: 1px; background: linear-gradient(#4a4a4a, #3c3c3c); border-left: 1px solid #555; padding-left: 13px; font-size: 10.6px; ${Updown} { margin-left: auto; }`;
const Green = styled.div`
  position: absolute; left: 1901px; top: 739px; width: 48px; height: 48px; border-radius: 50%; border: 2px solid #f2f2f2;
  background: radial-gradient(circle at 50% 10%, #9deaa2, #4fd060 45%, #45c855); box-shadow: 0 2px 5px #111; font: bold 12.5px/44px "Liberation Sans", sans-serif; color: #fff; padding-left: 4px; text-shadow: 0 0 2px #175;
`;

/* ---------- app ---------- */

export default function App() {
  return (
    <Screen>
      <Global />
      <Defs />
      <MenuBar>
        <Grip /><Gap $w={6} />
        {([["File", 29], ["Edit", 31], ["Render", 48.5], ["Assets", 44.5], ["Windows", 59], ["Help", 51]] as TabDef[]).map(([t, w]) => <MenuItem key={t} $w={w}>{t}</MenuItem>)}
        <Combo $w={128}><Icon n="layout" s={19} />Build<Updown /></Combo><Gap $w={4} />
        <Combo $w={128}><Icon n="desktop" s={19} />Main<Updown /></Combo>
        <Push />
        <Combo $w={128}><Icon n="clap" s={18} />Main<Updown /></Combo><Gap $w={6} /><Icon n="help" s={20} /><Gap $w={7} />
      </MenuBar>
      <Shelf>
        <Grip $w={11} />
        <ShelfPart w={878} tabs={leftTabs} tools={leftTools} />
        <Splitter />
        <ShelfPart w={1019} tabs={rightTabs} tools={rightTools} />
      </Shelf>
      <Main>
        <VSplit $w={8}><Nubs /></VSplit>
        <Pane $w={767}>
          <PaneTabs>
            {([["Scene View", 83], ["Animation Editor", 106], ["Render View", 88], ["Composite View", 102], ["Motion FX View", 106], ["Geometry Spreadsh…", 121]] as TabDef[]).map(([t, w], i) => <PaneTab key={t} $w={w} $on={i === 0}>{t}</PaneTab>)}
            <Gap $w={8} /><Plus /><Push /><WinBox /><Gap $w={9} /><Down /><Gap $w={5} />
          </PaneTabs>
          <PathBar>
            <Gap $w={4} /><Icon n="back" s={19} /><Gap $w={6} /><Icon n="fwd" s={19} /><Gap $w={6} />
            <PathIcons w={576} />
            <Gap $w={9} /><Icon n="pin" s={19} /><Gap $w={3} /><Icon n="target" s={21} /><Gap $w={14} />
            <WithArrow><Icon n="cube" s={18} /></WithArrow><Gap $w={7} /><WithArrow><Icon n="ball" s={20} /></WithArrow><Gap $w={3} /><WithArrow><Icon n="white" s={19} /></WithArrow>
          </PathBar>
          <ViewHead>
            <Grip $w={10} />
            <ViewTools>
              <Gap $w={5} /><WithArrow><Icon n="camera" s={16} /></WithArrow><Gap $w={5} /><ViewTitle>View</ViewTitle>
              <Push />
              <WithArrow><Icon n="seltool" s={18} /></WithArrow><Gap $w={15} /><WithArrow><Icon n="selcurve" s={18} /></WithArrow><Gap $w={15} /><WithArrow><Icon n="selcam" s={18} /></WithArrow>
              <Gap $w={287} />
              <WithArrow><Icon n="people" s={18} /></WithArrow><Gap $w={6} /><Icon n="help" s={19} /><Gap $w={4} />
            </ViewTools>
          </ViewHead>
          <ViewBody>
            <SideCol $w={34}>
              <Scroller />
              <Trio>
                {["cone", "diamond", "ybox"].map((n, i) => <SideItem key={n} $mt={0} $w={23} $on={i === 1}><WithArrow $dir="r" $c={i === 1 ? "#333" : undefined}><Icon n={n} s={17} /></WithArrow></SideItem>)}
              </Trio>
              <SideList items={leftSide} start={258} s={19} />
            </SideCol>
            <Viewport>
              <Scene />
              <Pill $r={73} $w={52}>Persp<Down /></Pill>
              <Pill $r={5} $w={61}>No cam<Down /></Pill>
              <Stats><Fps>18fps</Fps><Ms>54.07ms</Ms><Count>331,224  prims</Count><Count>331,296 points</Count></Stats>
            </Viewport>
            <SideCol $w={26}>
              <Scroller $right />
              <SideList items={rightSide} start={179} s={16} />
            </SideCol>
          </ViewBody>
        </Pane>
        <VSplit $w={9}><Nubs /></VSplit>
        <Pane $w={1134}>
          <PaneEdge><Down $c="#999" /><EdgeDots /><Down $c="#999" /></PaneEdge>
          <PaneTabs>
            {([["/obj/geo1", 76], ["Tree View", 78], ["Material Palette", 101], ["Asset Browser", 95]] as TabDef[]).map(([t, w], i) => <PaneTab key={t} $w={w} $on={i === 0}>{i === 0 ? <em>{t}</em> : t}</PaneTab>)}
            <Gap $w={7} /><Plus /><Push /><WinBox /><Gap $w={9} /><Down /><Gap $w={4} />
          </PaneTabs>
          <PathBar>
            <Gap $w={4} /><Icon n="back" s={19} /><Gap $w={6} /><Icon n="fwd" s={19} /><Gap $w={6} />
            <PathIcons w={1027} />
            <Gap $w={9} /><Icon n="pin" s={19} /><Gap $w={3} /><Icon n="target" s={21} />
          </PathBar>
          <NetMenu>
            <Grip $w={10} /><Gap $w={8} />
            {([["Add", 36], ["Edit", 36], ["Go", 29.5], ["View", 40.5], ["Tools", 43.5], ["Layout", 52], ["Help", 50]] as TabDef[]).map(([t, w]) => <MenuItem key={t} $w={w}>{t}</MenuItem>)}
            <Push />
            {([["tools", 24], ["hier", 24], ["list", 24], ["", 16], ["palette", 25], ["table", 24], ["", 16], ["nodes", 24], ["note", 24], ["image", 24], ["bundle", 24], ["", 17], ["search", 24], ["eye", 24]] as TabDef[]).map(([n, w], i) => <Spot key={i} $w={w}>{n && <Icon n={n} s={20} />}</Spot>)}
          </NetMenu>
          <Canvas>
            <Watermark>Geometry</Watermark>
            <Wires />
            <NetBox $x={998} $y={150} $w={235} $h={151} />
            <NetBox $x={999} $y={323} $w={290} $h={124}><BoxHead><Fold />生成由内而外变小的<Lat>pscale</Lat></BoxHead></NetBox>
            <NetBox $x={999} $y={460} $w={292} $h={255}><BoxHead><Fold />通过<Lat>VDB</Lat>生成<Lat>Polygon&nbsp;</Lat>并缓存</BoxHead></NetBox>
            <NetBox $x={998} $y={726} $w={322} $h={98}><BoxHead><Fold />让根部点模型生成颜色范围渐变</BoxHead></NetBox>
            <NetBox $x={1314} $y={594} $w={276} $h={114}><BoxHead><Fold />给根部点添加随机黑白颜色</BoxHead></NetBox>
            <Nodes />
            <NodeName $x={1127} $y={187}>group1</NodeName>
            <NodeNote $x={1127} $y={226}>group1</NodeNote>
            <NodeName $x={1127} $y={273}>delete6</NodeName>
            <NodeType $x={1133} $y={399}>Attribute VOP</NodeType>
            <NodeName $x={1133} $y={420}>pointvop8</NodeName>
            <NodeName $x={1131} $y={519}>vdbfromparticles1</NodeName>
            <NodeName $x={1133} $y={605}>convertvdb1</NodeName>
            <NodeName $x={1131} $y={676}>file1</NodeName>
            <NodeNote $x={1131} $y={703}>neuron3.bgeo</NodeNote>
            <NodeName $x={1132} $y={795}>attribtransfer1</NodeName>
            <NodeName $x={939} $y={889}>merge2</NodeName>
            <NodeType $x={1465} $y={652}>Attribute VOP</NodeType>
            <NodeName $x={1465} $y={673}>pointvop15</NodeName>
            <Parameters />
          </Canvas>
        </Pane>
      </Main>
      <Playbar>
        <FootGrip><Down $c="#000" /></FootGrip>
        <Transport>
          {playIcons.map((ic, i) => <PlayBtn key={i} $on={i === 4}><svg width="19" height="19" viewBox="0 0 20 20">{ic}</svg></PlayBtn>)}
        </Transport>
        <FrameField>55</FrameField>
        <RangeCol $w={41}><RangeCell $in>1</RangeCell><RangeCell>1</RangeCell></RangeCol>
        <Timeline><TimeAxis /><Scroll /><Head>55</Head></Timeline>
        <Gap $w={1} />
        <RangeCol $w={41}><RangeCell $in>240</RangeCell><RangeCell>240</RangeCell></RangeCol>
        <Gap $w={4} /><Square $w={28} $h={29} $mt={7}><Icon n="key" /></Square><Gap $w={5} />
        {["gauge", "loop", "sound", "opts"].map(n => <Square key={n} $w={22} $h={24} $mt={9}><Icon n={n} s={18} /></Square>)}
      </Playbar>
      <Status>
        <StatusRight><Icon n="brain" s={20} /><Icon n="refresh" s={19} /><Update>Auto Update<Updown /></Update></StatusRight>
      </Status>
      <Green>70</Green>
    </Screen>
  );
}
